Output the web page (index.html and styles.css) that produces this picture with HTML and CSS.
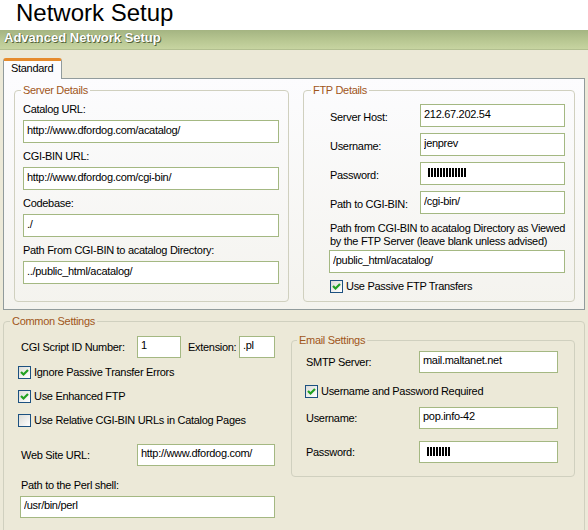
FILE: index.html
```html
<!DOCTYPE html>
<html lang="en">
<head>
    <meta charset="UTF-8">
    <title>Network Setup</title>
    <link rel="stylesheet" href="styles.css">
</head>
<body>

    <div class="title">Network Setup</div>
    <div class="bar">Advanced Network Setup</div>

    <div class="main">
        <div class="tabs">
            <div class="tab">Standard</div>
        </div>

        <div class="panel">
            <fieldset class="group server">
                <legend>Server Details</legend>
                <label class="stack-label">Catalog URL:</label>
                <input class="field" value="http://www.dfordog.com/acatalog/" readonly>
                <label class="stack-label">CGI-BIN URL:</label>
                <input class="field" value="http://www.dfordog.com/cgi-bin/" readonly>
                <label class="stack-label">Codebase:</label>
                <input class="field" value="./" readonly>
                <label class="stack-label">Path From CGI-BIN to acatalog Directory:</label>
                <input class="field" value="../public_html/acatalog/" readonly>
            </fieldset>

            <fieldset class="group ftp">
                <legend>FTP Details</legend>
                <div class="row first">
                    <span class="row-label">Server Host:</span>
                    <input class="field" value="212.67.202.54" readonly>
                </div>
                <div class="row">
                    <span class="row-label">Username:</span>
                    <input class="field" value="jenprev" readonly>
                </div>
                <div class="row">
                    <span class="row-label">Password:</span>
                    <div class="field pw-field"><span class="pw pw-long"></span></div>
                </div>
                <div class="row">
                    <span class="row-label">Path to CGI-BIN:</span>
                    <input class="field" value="/cgi-bin/" readonly>
                </div>
                <div class="note">Path from CGI-BIN to acatalog Directory as Viewed<br>by the FTP Server (leave blank unless advised)</div>
                <input class="field note-field" value="/public_html/acatalog/" readonly>
                <div class="check-row">
                    <span class="box"><svg width="11" height="11" viewBox="0 0 11 11"><path d="M2 5l2.5 2.5L9 3" fill="none" stroke="#21a121" stroke-width="2.2"/></svg></span>
                    Use Passive FTP Transfers
                </div>
            </fieldset>
        </div>

        <fieldset class="group common">
            <legend>Common Settings</legend>
            <div class="common-body">
                <div class="common-left">
                    <div class="id-row">
                        <span class="c-label">CGI Script ID Number:</span>
                        <input class="field id-field" value="1" readonly>
                        <span class="ext-label">Extension:</span>
                        <input class="field ext-field" value=".pl" readonly>
                    </div>
                    <div class="check-row">
                        <span class="box"><svg width="11" height="11" viewBox="0 0 11 11"><path d="M2 5l2.5 2.5L9 3" fill="none" stroke="#21a121" stroke-width="2.2"/></svg></span>
                        Ignore Passive Transfer Errors
                    </div>
                    <div class="check-row">
                        <span class="box"><svg width="11" height="11" viewBox="0 0 11 11"><path d="M2 5l2.5 2.5L9 3" fill="none" stroke="#21a121" stroke-width="2.2"/></svg></span>
                        Use Enhanced FTP
                    </div>
                    <div class="check-row">
                        <span class="box"></span>
                        Use Relative CGI-BIN URLs in Catalog Pages
                    </div>
                    <div class="web-row">
                        <span class="c-label">Web Site URL:</span>
                        <input class="field web-field" value="http://www.dfordog.com/" readonly>
                    </div>
                    <div class="perl-label">Path to the Perl shell:</div>
                    <input class="field perl-field" value="/usr/bin/perl" readonly>
                </div>

                <fieldset class="group email">
                    <legend>Email Settings</legend>
                    <div class="row smtp">
                        <span class="row-label">SMTP Server:</span>
                        <input class="field" value="mail.maltanet.net" readonly>
                    </div>
                    <div class="check-row">
                        <span class="box"><svg width="11" height="11" viewBox="0 0 11 11"><path d="M2 5l2.5 2.5L9 3" fill="none" stroke="#21a121" stroke-width="2.2"/></svg></span>
                        Username and Password Required
                    </div>
                    <div class="row user">
                        <span class="row-label">Username:</span>
                        <input class="field" value="pop.info-42" readonly>
                    </div>
                    <div class="row pass">
                        <span class="row-label">Password:</span>
                        <div class="field pw-field"><span class="pw pw-short"></span></div>
                    </div>
                </fieldset>
            </div>
        </fieldset>
    </div>

</body>
</html>
```

FILE: styles.css
```css
body {
    margin: 0;
    font: 11px/14px "Liberation Sans", Arial, sans-serif;
    letter-spacing: -0.3px;
    color: #000;
    background: #ece9d8;
}

.title {
    height: 30px;
    padding-left: 16px;
    background: #fff;
    font-size: 24px;
    line-height: 25px;
    letter-spacing: 0;
}

.bar {
    height: 20px;
    box-sizing: border-box;
    padding-left: 4px;
    font-size: 13px;
    font-weight: bold;
    line-height: 16px;
    letter-spacing: 0;
    color: #fff;
    text-shadow: 1px 1px 0 #56643a, 0 0 1px #6a7848;
    background: linear-gradient(#a4b482, #b8c792 55%, #c7d4a1);
    border-bottom: 1px solid #b2bf90;
}

.main {
    padding: 8px 3px 0;
}

/* tab strip */
.tabs {
    display: flex;
}

.tab {
    position: relative;
    z-index: 1;
    height: 21px;
    box-sizing: border-box;
    margin-bottom: -1px;
    padding: 0 8px 0 7px;
    border: 1px solid #919b9c;
    border-top: 3px solid #e68b2c;
    border-bottom: 0;
    border-radius: 3px 3px 0 0;
    background: #fcfcfe;
    line-height: 14px;
}

.panel {
    display: flex;
    gap: 14px;
    padding: 5px 9px 7px 10px;
    border: 1px solid #919b9c;
    background: linear-gradient(#fcfcfe, #f4f3ee);
}

/* group boxes */
.group {
    margin: 0;
    min-width: 0;
    box-sizing: border-box;
    border: 1px solid #d0d0bf;
    border-radius: 4px;
}

.group legend {
    padding: 0 2px;
    line-height: 12px;
    color: #a0561a;
}

.server {
    width: 275px;
    padding: 0 9px 17px 8px;
}

.server legend {
    margin-left: -2px;
}

.ftp {
    width: 272px;
    padding: 0 9px 8px 26px;
}

.ftp legend {
    margin-left: -19px;
}

.stack-label {
    display: block;
    padding: 6px 0 4px;
}

.field {
    display: block;
    box-sizing: border-box;
    height: 23px;
    margin: 0;
    padding: 0 3px 4px;
    border: 1px solid #a4b882;
    background: #fff;
    font: inherit;
    letter-spacing: inherit;
    color: #000;
    outline: none;
}

.server .field {
    width: 256px;
}

.row {
    display: flex;
    align-items: center;
    height: 23px;
    margin-top: 6px;
}

.row.first {
    margin-top: 8px;
}

.row-label {
    width: 90px;
    padding-top: 3px;
    flex: none;
}

.ftp .row .field {
    width: 145px;
}

.pw-field {
    display: flex;
    align-items: center;
    padding: 0 0 2px 7px;
}

.pw {
    height: 9px;
    background: repeating-linear-gradient(90deg, #000 0 2px, transparent 2px 3px);
}

.pw-long {
    width: 38px;
}

.pw-short {
    width: 24px;
}

.note {
    margin-top: 8px;
    line-height: 13px;
    white-space: nowrap;
}

.note-field {
    width: 236px;
    margin: 2px 0 0 -1px;
}

.check-row {
    display: flex;
    align-items: center;
    gap: 3px;
    height: 13px;
    line-height: 13px;
}

.ftp .check-row {
    margin-top: 7px;
}

.box {
    width: 13px;
    height: 13px;
    box-sizing: border-box;
    flex: none;
    border: 1px solid #1c5180;
    background: linear-gradient(135deg, #dcdcd7, #fff);
}

.box svg {
    display: block;
}

/* common settings */
.common {
    width: 582px;
    margin-top: 5px;
    padding: 0 9px 20px 14px;
}

.common legend {
    margin-left: -8px;
}

.common-body {
    display: flex;
    align-items: flex-start;
    gap: 16px;
}

.common-left {
    width: 257px;
    padding-top: 9px;
}

.id-row,
.web-row {
    display: flex;
    align-items: center;
    height: 22px;
}

.c-label {
    width: 119px;
    box-sizing: border-box;
    padding-left: 3px;
    flex: none;
}

.common .field {
    height: 22px;
}

.id-field {
    width: 44px;
}

.ext-label {
    margin-left: 7px;
}

.ext-field {
    width: 36px;
    margin-left: auto;
}

.common-left .check-row {
    margin-top: 11px;
}

.common-left .id-row + .check-row {
    margin-top: 8px;
}

.web-row {
    margin-top: 17px;
}

.web-field {
    width: 138px;
}

.perl-label {
    margin-top: 13px;
    padding-left: 3px;
    line-height: 13px;
}

.perl-field {
    width: 255px;
    margin: 4px 0 0 2px;
}

.email {
    width: 284px;
    margin-top: 7px;
    padding: 0 16px 13px 14px;
}

.email legend {
    margin-left: -9px;
}

.email .row {
    height: 22px;
}

.email .row-label {
    width: 113px;
    padding-top: 0;
}

.email .row .field {
    width: 139px;
}

.email .smtp {
    margin-top: 5px;
}

.email .check-row {
    margin: 12px 0 0 -1px;
}

.email .user {
    margin-top: 9px;
}

.email .pass {
    margin-top: 12px;
}
```
